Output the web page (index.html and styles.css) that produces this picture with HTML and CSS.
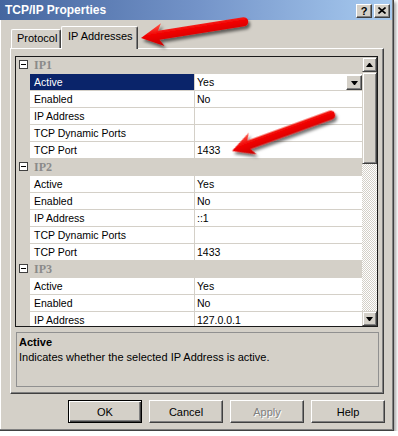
FILE: index.html
```html
<!DOCTYPE html>
<html lang="en">
<head>
    <meta charset="UTF-8">
    <title>TCP/IP Properties</title>
    <link rel="stylesheet" href="styles.css">
</head>
<body>
    <div class="window">
        <!-- Title bar -->
        <div class="titlebar">
            <span class="title">TCP/IP Properties</span>
            <div class="caption-buttons">
                <div class="caption-btn">?</div>
                <div class="caption-btn">
                    <svg width="8" height="7" viewBox="0 0 8 7"><path d="M0.5 0.5 L7.5 6.5 M7.5 0.5 L0.5 6.5" stroke="#000" stroke-width="1.6"/></svg>
                </div>
            </div>
        </div>

        <!-- Tabs -->
        <div class="tabs">
            <div class="tab">Protocol</div>
            <div class="tab active">IP Addresses</div>
        </div>

        <div class="panel">
            <!-- Property grid -->
            <div class="grid">
                <div class="rows">
                    <div class="category"><div class="gutter"><span class="toggle"></span></div><span class="cat-name">IP1</span></div>
                    <div class="row selected"><div class="gutter"></div><div class="label">Active</div><div class="value">Yes<span class="drop-btn"><span class="arrow-down"></span></span></div></div>
                    <div class="row"><div class="gutter"></div><div class="label">Enabled</div><div class="value">No</div></div>
                    <div class="row"><div class="gutter"></div><div class="label">IP Address</div><div class="value"></div></div>
                    <div class="row"><div class="gutter"></div><div class="label">TCP Dynamic Ports</div><div class="value"></div></div>
                    <div class="row"><div class="gutter"></div><div class="label">TCP Port</div><div class="value">1433</div></div>

                    <div class="category"><div class="gutter"><span class="toggle"></span></div><span class="cat-name">IP2</span></div>
                    <div class="row"><div class="gutter"></div><div class="label">Active</div><div class="value">Yes</div></div>
                    <div class="row"><div class="gutter"></div><div class="label">Enabled</div><div class="value">No</div></div>
                    <div class="row"><div class="gutter"></div><div class="label">IP Address</div><div class="value">::1</div></div>
                    <div class="row"><div class="gutter"></div><div class="label">TCP Dynamic Ports</div><div class="value"></div></div>
                    <div class="row"><div class="gutter"></div><div class="label">TCP Port</div><div class="value">1433</div></div>

                    <div class="category"><div class="gutter"><span class="toggle"></span></div><span class="cat-name">IP3</span></div>
                    <div class="row"><div class="gutter"></div><div class="label">Active</div><div class="value">Yes</div></div>
                    <div class="row"><div class="gutter"></div><div class="label">Enabled</div><div class="value">No</div></div>
                    <div class="row"><div class="gutter"></div><div class="label">IP Address</div><div class="value">127.0.0.1</div></div>
                </div>
                <div class="scrollbar">
                    <div class="sb-btn"><span class="arrow-up"></span></div>
                    <div class="sb-thumb"></div>
                    <div class="sb-track"></div>
                    <div class="sb-btn"><span class="arrow-down"></span></div>
                </div>
            </div>

            <!-- Help pane -->
            <div class="description">
                <div class="desc-title">Active</div>
                <div class="desc-text">Indicates whether the selected IP Address is active.</div>
            </div>
        </div>

        <div class="buttons">
            <button class="btn default">OK</button>
            <button class="btn">Cancel</button>
            <button class="btn disabled">Apply</button>
            <button class="btn">Help</button>
        </div>
    </div>

    <!-- Red callout arrows drawn over the dialog -->
    <svg class="callouts" width="398" height="436">
        <defs>
            <linearGradient id="red" x1="0" y1="0" x2="0" y2="1">
                <stop offset="0" stop-color="#ff5a4a"/>
                <stop offset="0.45" stop-color="#f00000"/>
                <stop offset="1" stop-color="#c80000"/>
            </linearGradient>
            <filter id="shadow" x="-20%" y="-50%" width="140%" height="200%">
                <feDropShadow dx="2" dy="3" stdDeviation="1.6" flood-color="#000" flood-opacity="0.55"/>
            </filter>
        </defs>
        <g filter="url(#shadow)" fill="url(#red)">
            <path transform="translate(141 38) rotate(-9)" d="M0 0 L22 -11.5 L18 -4.5 L104 -4.5 A4.5 4.5 0 0 1 104 4.5 L18 4.5 L22 11.5 Z"/>
            <path transform="translate(232 151) rotate(-20)" d="M0 0 L22 -11.5 L18 -4.5 L105 -4.5 A4.5 4.5 0 0 1 105 4.5 L18 4.5 L22 11.5 Z"/>
        </g>
    </svg>
</body>
</html>
```

FILE: styles.css
```css
body {
    margin: 0;
    background: #fff;
    font-family: "Liberation Sans", Arial, sans-serif;
    font-size: 10.5px;
    color: #000;
}
.window {
    position: relative;
    box-sizing: border-box;
    width: 394px;
    height: 431px;
    background: #d4d0c8;
    border-right: 1px solid #404040;
    border-bottom: 1px solid #404040;
    box-shadow: inset -1px -1px #808080, inset 1px 0 #fff, 2px 2px 3px rgba(0, 0, 0, 0.35);
    display: flex;
    flex-direction: column;
}
.titlebar {
    height: 20px;
    margin-right: 1px;
    padding: 0 2px 0 5px;
    display: flex;
    align-items: center;
    justify-content: space-between;
    background: linear-gradient(to right, #45669f, #7393c8 50%, #a8cbf0);
}
.title {
    color: #fff;
    font-weight: bold;
    font-size: 12px;
}
.caption-buttons {
    display: flex;
    gap: 2px;
    margin-top: 1px;
}
.caption-btn {
    box-sizing: border-box;
    width: 16px;
    height: 14px;
    background: #d4d0c8;
    border: 1px solid;
    border-color: #fff #404040 #404040 #fff;
    box-shadow: inset -1px -1px #808080;
    display: flex;
    align-items: center;
    justify-content: center;
    font-weight: bold;
    font-size: 11px;
    line-height: 12px;
}
.tabs {
    height: 28px;
    padding-left: 11px;
    display: flex;
    align-items: flex-end;
}
.tab {
    box-sizing: border-box;
    width: 50px;
    height: 19px;
    padding-left: 5px;
    line-height: 17px;
    font-size: 11px;
    border-top: 1px solid #fff;
    border-left: 1px solid #fff;
    border-right: 1px solid #404040;
    border-radius: 2px 2px 0 0;
    box-shadow: inset -1px 0 #808080;
}
.tab.active {
    width: 77px;
    height: 23px;
    padding-left: 6px;
    line-height: 19px;
    margin-bottom: -1px;
    position: relative;
    z-index: 1;
    background: #d4d0c8;
}
.panel {
    box-sizing: border-box;
    width: 374px;
    height: 346px;
    margin-left: 10px;
    padding: 7px 0 0 4px;
    border: 1px solid;
    border-color: #fff #404040 #404040 #fff;
    box-shadow: inset -1px -1px #808080;
}
.grid {
    width: 361px;
    height: 269px;
    border: 1px solid #1a1a1a;
    display: flex;
    background: #fff;
}
.rows {
    width: 346px;
    height: 269px;
    overflow: hidden;
}
.row, .category {
    display: flex;
    height: 17px;
}
.gutter {
    width: 14px;
    flex-shrink: 0;
    background: #d4d0c8;
}
.category {
    background: #d4d0c8;
}
.toggle {
    display: block;
    box-sizing: border-box;
    width: 9px;
    height: 9px;
    margin: 3px 0 0 3px;
    border: 1px solid #404040;
    background: #fff;
    position: relative;
}
.toggle::after {
    content: "";
    position: absolute;
    left: 1px;
    top: 3px;
    width: 5px;
    height: 1px;
    background: #000;
}
.cat-name {
    padding-left: 4px;
    line-height: 16px;
    font-family: "Liberation Serif", "Times New Roman", serif;
    font-weight: bold;
    font-size: 12px;
    color: #8a8a8a;
}
.label {
    box-sizing: border-box;
    width: 165px;
    padding-left: 4px;
    line-height: 16px;
    border-right: 1px solid #d4d0c8;
    border-bottom: 1px solid #d4d0c8;
    white-space: nowrap;
}
.row.selected .label {
    background: #0a246a;
    color: #fff;
}
.value {
    flex: 1;
    display: flex;
    padding-left: 2px;
    line-height: 16px;
    border-bottom: 1px solid #d4d0c8;
}
.drop-btn {
    box-sizing: border-box;
    width: 16px;
    height: 15px;
    margin: 1px 0 0 auto;
    background: #d4d0c8;
    border: 1px solid;
    border-color: #fff #404040 #404040 #fff;
    box-shadow: inset -1px -1px #808080;
    display: flex;
    align-items: center;
    justify-content: center;
}
.arrow-down, .arrow-up {
    width: 1px;
    height: 0;
    border-left: 3px solid transparent;
    border-right: 3px solid transparent;
}
.arrow-down {
    border-top: 4px solid #000;
}
.arrow-up {
    border-bottom: 4px solid #000;
}
.scrollbar {
    width: 15px;
    display: flex;
    flex-direction: column;
}
.sb-btn, .sb-thumb {
    box-sizing: border-box;
    background: #d4d0c8;
    border: 1px solid;
    border-color: #d4d0c8 #404040 #404040 #d4d0c8;
    box-shadow: inset 1px 1px #fff, inset -1px -1px #808080;
}
.sb-btn {
    height: 15px;
    display: flex;
    align-items: center;
    justify-content: center;
}
.sb-thumb {
    height: 92px;
}
.sb-track {
    flex: 1;
    background: repeating-conic-gradient(#fff 0 25%, #d4d0c8 0 50%) 0 0 / 2px 2px;
}
.description {
    box-sizing: border-box;
    width: 363px;
    height: 55px;
    margin: 5px 0 0 1px;
    padding: 2px 0 0 2px;
    border: 1px solid #909090;
    font-size: 11px;
    line-height: 15px;
}
.desc-title {
    font-weight: bold;
}
.buttons {
    display: flex;
    justify-content: flex-end;
    gap: 7px;
    margin-top: 6px;
    padding-right: 8px;
}
.btn {
    box-sizing: border-box;
    width: 74px;
    height: 23px;
    padding: 0;
    background: #d4d0c8;
    border: 1px solid;
    border-color: #fff #404040 #404040 #fff;
    box-shadow: inset -1px -1px #808080;
    font-family: "Liberation Sans", Arial, sans-serif;
    font-size: 11px;
    color: #000;
}
.btn.default {
    border: 1px solid #000;
    box-shadow: inset 1px 1px #fff, inset -1px -1px #404040, inset -2px -2px #808080;
}
.btn.disabled {
    color: #808080;
    text-shadow: 1px 1px #fff;
}
.callouts {
    position: absolute;
    left: 0;
    top: 0;
    pointer-events: none;
}
```
